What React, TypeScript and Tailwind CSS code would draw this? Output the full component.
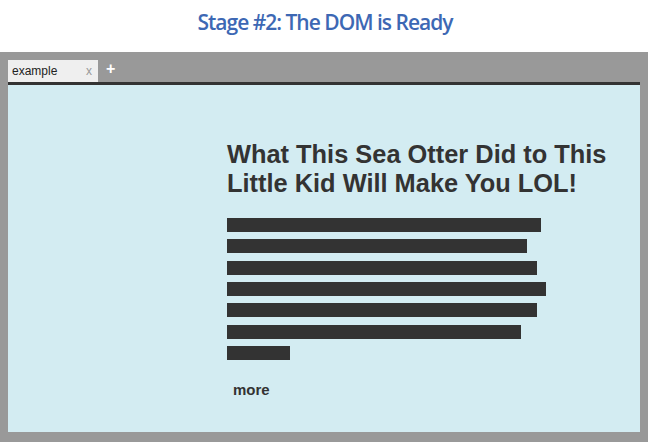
const bars = [314, 300, 310, 319, 310, 294, 63];

export default function App() {
  return (
    <div className="w-[650px] h-[442px] bg-white overflow-hidden flex flex-col">
      <h1
        className="h-[52px] pt-[7px] text-center text-[21px] font-semibold text-[#3d68b4] tracking-[-1px]"
        style={{ fontFamily: '"Open Sans", sans-serif' }}
      >
        Stage #2: The DOM is Ready
      </h1>
      <div className="w-[648px] flex-1 bg-[#999999] px-[8px] pb-[10px] flex flex-col">
        <div className="h-[30px] flex items-end gap-[8px] font-['Liberation_Sans',Arial,sans-serif]">
          <div className="w-[90px] h-[22px] bg-[#efefef] flex items-center justify-between pl-[4px] pr-[6px]">
            <span className="text-[12px] text-[#222]">example</span>
            <span className="text-[12px] text-[#999] leading-none">x</span>
          </div>
          <span className="text-white text-[16px] font-bold leading-none mb-[5px]">+</span>
        </div>
        <div className="h-[3px] bg-[#333]" />
        <div className="flex-1 bg-[#d3ecf2] pl-[219px] pt-[55px] font-['Liberation_Sans',Arial,sans-serif] text-[#333]">
          <h2 className="text-[25.4px] font-bold leading-[29px] w-[420px]">
            What This Sea Otter Did to This Little Kid Will Make You LOL!
          </h2>
          <div className="mt-[20px] flex flex-col gap-[7.33px]">
            {bars.map((w, i) => (
              <div key={i} className="h-[14px] bg-[#333]" style={{ width: w }} />
            ))}
          </div>
          <div className="mt-[19px] ml-[6px] text-[15px] font-bold">more</div>
        </div>
      </div>
    </div>
  );
}
